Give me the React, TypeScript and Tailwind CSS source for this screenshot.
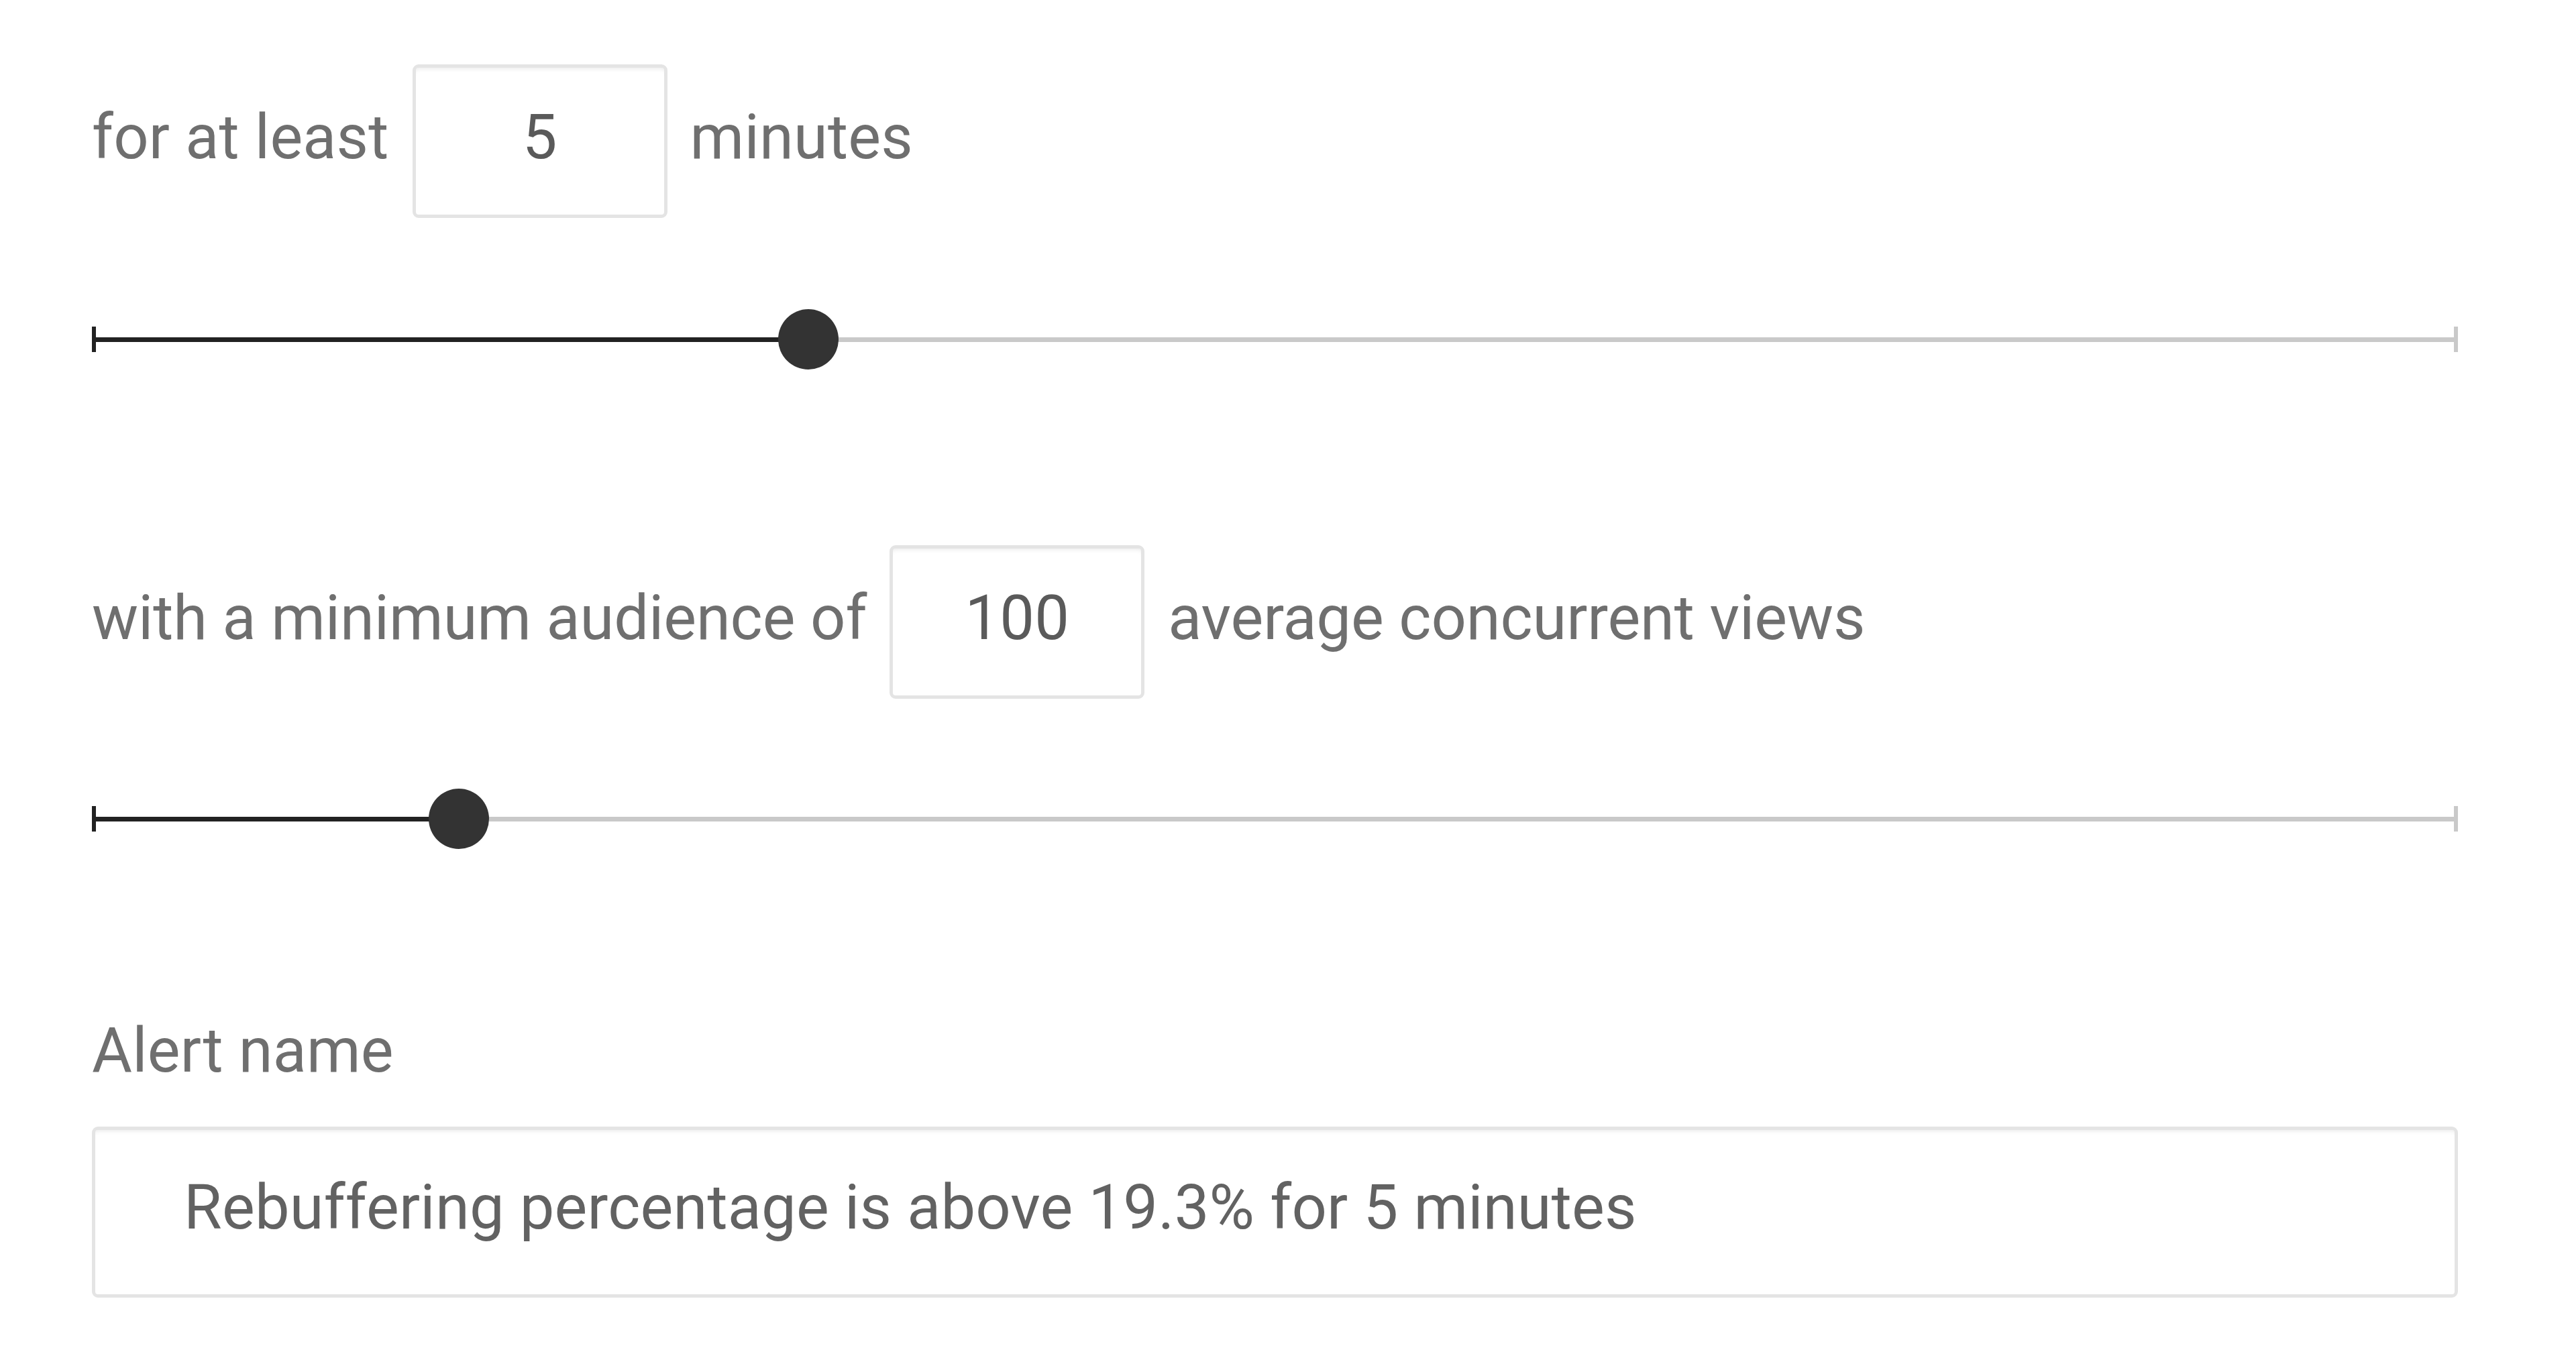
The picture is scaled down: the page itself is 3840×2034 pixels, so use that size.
import React from "react";

function NumBox({ value }: { value: string }) {
  return (
    <div className="flex h-[229px] w-[380px] items-center justify-center rounded-[9px] border-[5px] border-[#e4e4e4] bg-white pb-[12px] text-[#5a5a5a] shadow-[inset_0_7px_6px_-5px_rgba(0,0,0,0.08)]">
      {value}
    </div>
  );
}

function Slider({ pct }: { pct: number }) {
  return (
    <div className="relative flex h-[90px] w-full items-center">
      <div className="h-[38px] w-[6px] shrink-0 bg-[#222222]" />
      <div className="relative h-[7px] flex-1 bg-[#c9c9c9]">
        <div className="absolute left-0 top-0 h-full bg-[#222222]" style={{ width: `${pct}%` }} />
        <div
          className="absolute top-1/2 h-[90px] w-[90px] -translate-x-1/2 -translate-y-1/2 rounded-full bg-[#333333]"
          style={{ left: `${pct}%` }}
        />
      </div>
      <div className="h-[38px] w-[6px] shrink-0 bg-[#c9c9c9]" />
    </div>
  );
}

export default function App() {
  return (
    <div
      className="min-h-[2034px] w-full bg-white pl-[137px] pt-[96px] text-[92px] leading-none tracking-[0.2px] text-[#6f6f6f]"
      style={{ fontFamily: "Roboto, 'Liberation Sans', sans-serif" }}
    >
      <div className="w-[3527px]">
        <div className="flex items-center">
          <span className="mr-[35px] pb-[12px]">for at least</span>
          <NumBox value="5" />
          <span className="ml-[34px] pb-[12px]">minutes</span>
        </div>
        <div className="mt-[136px]">
          <Slider pct={30.2} />
        </div>

        <div className="mt-[262px] flex items-center">
          <span className="mr-[34px] pb-[12px] tracking-[-0.1px]">with a minimum audience of</span>
          <NumBox value="100" />
          <span className="ml-[35px] pb-[12px] tracking-[-0.1px]">average concurrent views</span>
        </div>
        <div className="mt-[134px]">
          <Slider pct={15.4} />
        </div>

        <div className="mt-[255px]">Alert name</div>
        <div className="mt-[67px] flex h-[255px] items-center rounded-[9px] border-[5px] border-[#e4e4e4] bg-white pb-[14px] pl-[132px] text-[#626262] shadow-[inset_0_7px_6px_-5px_rgba(0,0,0,0.08)]">
          Rebuffering percentage is above 19.3% for 5 minutes
        </div>
      </div>
    </div>
  );
}
